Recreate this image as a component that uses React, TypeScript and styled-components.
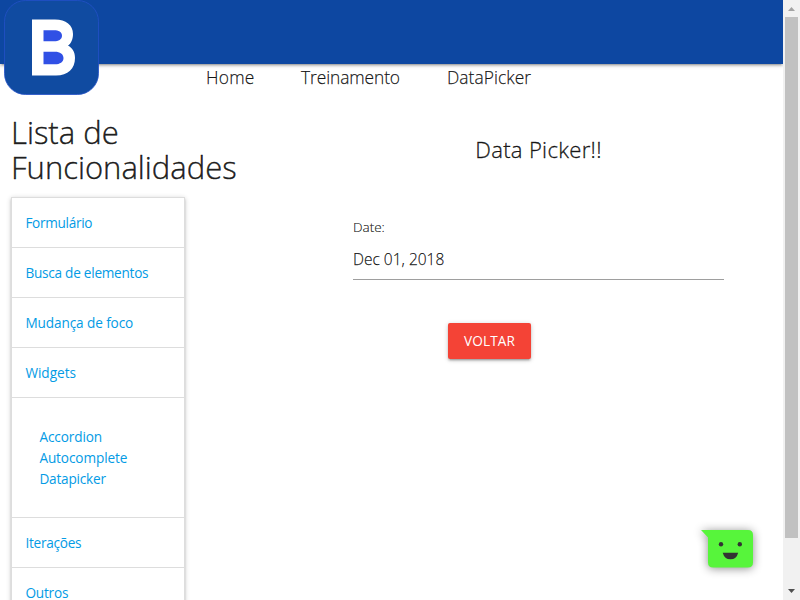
import React from "react";
import styled, { createGlobalStyle } from "styled-components";

const GlobalStyle = createGlobalStyle`
  * { box-sizing: border-box; }
  html, body { margin: 0; padding: 0; overflow: hidden; background: #fff; }
  body { font-family: "Open Sans", "Noto Sans", sans-serif; color: rgba(0, 0, 0, 0.87); }
`;

const Page = styled.div`
  display: flex;
  width: 800px;
  height: 600px;
  overflow: hidden;
`;

const Content = styled.div`
  position: relative;
  width: 783px;
  height: 600px;
  overflow: hidden;
`;

const Header = styled.header`
  height: 64px;
  background: #0d47a1;
  box-shadow: 0 2px 2px 0 rgba(0, 0, 0, 0.14), 0 3px 1px -2px rgba(0, 0, 0, 0.12),
    0 1px 5px 0 rgba(0, 0, 0, 0.2);
`;

const Logo = styled.svg`
  position: absolute;
  left: 4px;
  top: 0;
`;

const Nav = styled.nav`
  display: grid;
  grid-template-columns: 95px 146px 100px;
  height: 28px;
  margin-left: 206px;
`;

const NavLink = styled.a<{ $spacing: number }>`
  font-size: 17.4px;
  font-weight: 300;
  -webkit-text-stroke: 0.25px currentColor;
  line-height: 26px;
  white-space: nowrap;
  letter-spacing: ${(p) => p.$spacing}px;
`;

const Columns = styled.div`
  display: flex;
`;

const Sidebar = styled.aside`
  width: 250px;
  padding: 23px 0 0 11px;
`;

const Title = styled.h1`
  margin: 0;
  font-size: 31px;
  font-weight: 300;
  -webkit-text-stroke: 0.4px currentColor;
  line-height: 35px;
`;

const TitleLine = styled.span<{ $spacing: number }>`
  display: block;
  white-space: nowrap;
  letter-spacing: ${(p) => p.$spacing}px;
`;

const Menu = styled.ul`
  width: 174px;
  margin: 12px 0 0;
  padding: 0;
  list-style: none;
  border: 1px solid #ddd;
  box-shadow: 0 2px 2px 0 rgba(0, 0, 0, 0.14), 0 3px 1px -2px rgba(0, 0, 0, 0.12),
    0 1px 5px 0 rgba(0, 0, 0, 0.2);
`;

const MenuItem = styled.li`
  height: 50px;
  padding-left: 13.4px;
  border-bottom: 1px solid #ddd;
  line-height: 50px;
  font-size: 13.6px;
  color: #039be5;
`;

const SubMenu = styled.li`
  display: flex;
  flex-direction: column;
  height: 120px;
  padding: 28px 0 0 27.4px;
  border-bottom: 1px solid #ddd;
  font-size: 13.6px;
  line-height: 21px;
  color: #039be5;
`;

const Label = styled.a<{ $spacing: number }>`
  width: max-content;
  white-space: nowrap;
  letter-spacing: ${(p) => p.$spacing}px;
`;

const Main = styled.main`
  display: flex;
  flex-direction: column;
  width: 371px;
  margin-left: 103px;
`;

const Heading = styled.h2`
  align-self: center;
  margin: 41px 0 0;
  font-size: 22.1px;
  font-weight: 300;
  -webkit-text-stroke: 0.35px currentColor;
  line-height: 32px;
  white-space: nowrap;
  letter-spacing: 0.3px;
`;

const FieldLabel = styled.label`
  margin-top: 52px;
  font-size: 13.5px;
  font-weight: 300;
  -webkit-text-stroke: 0.2px currentColor;
  line-height: 20px;
  letter-spacing: 0;
`;

const Input = styled.div`
  height: 43px;
  border-bottom: 1px solid #9e9e9e;
  line-height: 45px;
  font-size: 15.5px;
  font-weight: 300;
  -webkit-text-stroke: 0.25px currentColor;
  letter-spacing: 0;
`;

const Button = styled.button`
  width: 83px;
  height: 36px;
  margin: 43px 0 0 95px;
  padding: 0 0 2px;
  border: 0;
  border-radius: 2px;
  background: #f44336;
  color: #fff;
  font-family: inherit;
  font-size: 13.6px;
  letter-spacing: 0.1px;
  box-shadow: 0 2px 2px 0 rgba(0, 0, 0, 0.14), 0 3px 1px -2px rgba(0, 0, 0, 0.12),
    0 1px 5px 0 rgba(0, 0, 0, 0.2);
`;

const Chat = styled.svg`
  position: absolute;
  left: 690px;
  top: 515px;
  overflow: visible;
  filter: drop-shadow(0 1px 5px rgba(0, 0, 0, 0.45));
`;

const Scrollbar = styled.div`
  display: flex;
  flex-direction: column;
  align-items: center;
  width: 17px;
  height: 600px;
  background: #f1f1f1;
`;

const Arrow = styled.svg`
  flex: none;
  width: 17px;
  height: 17px;
`;

const BottomArrow = styled(Arrow)`
  margin-top: auto;
`;

const Thumb = styled.div`
  width: 13px;
  height: 521px;
  background: #c1c1c1;
`;

export default function App() {
  return (
    <Page>
      <GlobalStyle />
      <Content>
        <Header />
        <Logo width="95" height="95" viewBox="0 0 95 95">
          <rect x="0.5" y="0.5" width="94" height="94" rx="21" fill="#104ba1" stroke="#2350c8" strokeWidth="0.8" />
          <path d="M28 19.5H51C62 19.5 69 25 69 34C69 39.5 67 43.5 64 45.5C68.500 48 71 52 71 58C71 68.500 64 75.500 52 75.500H28Z" fill="#fff" />
          <path d="M39.500 30.300H50C54.500 30.300 58 32 58 35.700C58 39.400 54.500 41.200 50 41.200H39.500ZM39.500 51.700H51C56 51.700 59.500 54 59.500 58C59.500 62 56 64.300 51 64.300H39.500Z" fill="#3050e5" />
        </Logo>
        <Nav>
          <NavLink $spacing={0.25}>Home</NavLink>
          <NavLink $spacing={-0.1}>Treinamento</NavLink>
          <NavLink $spacing={0.05}>DataPicker</NavLink>
        </Nav>
        <Columns>
          <Sidebar>
            <Title>
              <TitleLine $spacing={0}>Lista de</TitleLine>
              <TitleLine $spacing={0}>Funcionalidades</TitleLine>
            </Title>
            <Menu>
              <MenuItem><Label $spacing={-0.3}>Formulário</Label></MenuItem>
              <MenuItem><Label $spacing={-0.25}>Busca de elementos</Label></MenuItem>
              <MenuItem><Label $spacing={-0.1}>Mudança de foco</Label></MenuItem>
              <MenuItem><Label $spacing={0}>Widgets</Label></MenuItem>
              <SubMenu>
                <Label $spacing={-0.1}>Accordion</Label>
                <Label $spacing={-0.1}>Autocomplete</Label>
                <Label $spacing={-0.2}>Datapicker</Label>
              </SubMenu>
              <MenuItem><Label $spacing={-0.25}>Iterações</Label></MenuItem>
              <MenuItem><Label $spacing={-0.2}>Outros</Label></MenuItem>
            </Menu>
          </Sidebar>
          <Main>
            <Heading>Data Picker!!</Heading>
            <FieldLabel>Date:</FieldLabel>
            <Input>Dec 01, 2018</Input>
            <Button>VOLTAR</Button>
          </Main>
        </Columns>
        <Chat width="64" height="54" viewBox="0 0 64 54">
          <path d="M11 15H58Q63 15 63 20V47.500Q63 52.500 58 52.500H23Q18 52.500 18 47.500V22.500Z" fill="#57f53b" />
          <circle cx="31" cy="29.300" r="2.200" fill="#333" />
          <circle cx="49.800" cy="29.300" r="2.200" fill="#333" />
          <path d="M32.700 37.700H48.200Q46.500 44.300 40.500 44.300Q34.500 44.300 32.700 37.700Z" fill="#333" />
        </Chat>
      </Content>
      <Scrollbar>
        <Arrow viewBox="0 0 17 17"><path d="M5 11L8.500 7L12 11Z" fill="#a3a3a3" /></Arrow>
        <Thumb />
        <BottomArrow viewBox="0 0 17 17"><path d="M5 6L8.500 10L12 6Z" fill="#505050" /></BottomArrow>
      </Scrollbar>
    </Page>
  );
}
